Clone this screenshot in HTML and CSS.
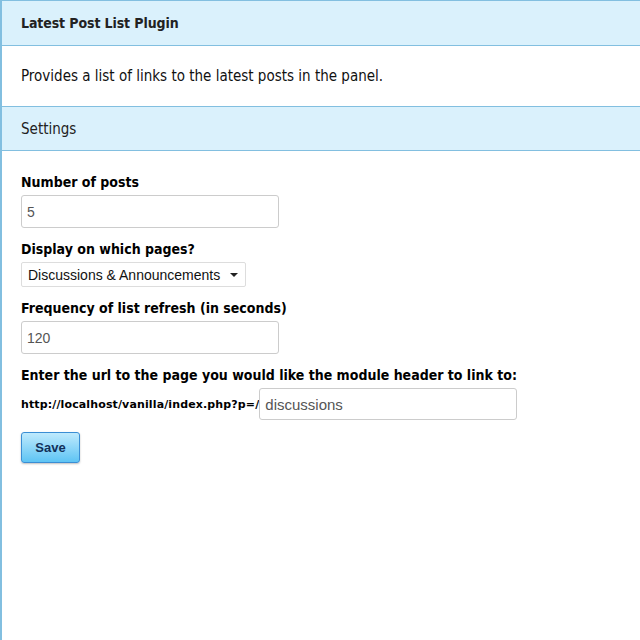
FILE: index.html
```html
<!DOCTYPE html>
<html>
<head>
<meta charset="utf-8">
<link rel="stylesheet" href="styles.css">
</head>
<body>
<div class="panel">
  <h1 class="band title">Latest Post List Plugin</h1>
  <div class="desc">Provides a list of links to the latest posts in the panel.</div>
  <h2 class="band settings">Settings</h2>
  <form class="form">
    <div class="field">
      <label class="label">Number of posts</label>
      <input class="input" type="text" value="5">
    </div>
    <div class="field">
      <label class="label">Display on which pages?</label>
      <div class="select"><span>Discussions &amp; Announcements</span><span class="caret"></span></div>
    </div>
    <div class="field">
      <label class="label">Frequency of list refresh (in seconds)</label>
      <input class="input" type="text" value="120">
    </div>
    <div class="field">
      <label class="label">Enter the url to the page you would like the module header to link to:</label>
      <div class="url-row">
        <span class="prefix">http://localhost/vanilla/index.php?p=/</span>
        <input class="input" type="text" value="discussions">
      </div>
    </div>
    <button class="save" type="button">Save</button>
  </form>
</div>
</body>
</html>
```
FILE: styles.css
```css
html, body {
  margin: 0;
  padding: 0;
  background: #fff;
}
body {
  font-family: "DejaVu Sans Condensed", "DejaVu Sans", sans-serif;
  color: #000;
  height: 640px;
}
.panel {
  border-left: 2px solid #82bfe0;
  min-height: 640px;
  box-sizing: border-box;
}
.band {
  margin: 0;
  background: #daf1fc;
  border-top: 1px solid #82bfe0;
  border-bottom: 1px solid #82bfe0;
  padding: 0 19px;
  display: flex;
  align-items: center;
  color: #222;
}
.title {
  height: 44px;
  font-size: 14px;
  font-weight: bold;
  letter-spacing: -0.1px;
}
.settings {
  height: 43px;
  font-size: 15px;
  font-weight: normal;
}
.desc {
  height: 60px;
  display: flex;
  align-items: center;
  padding: 0 19px;
  font-size: 15px;
  color: #111;
}
.form {
  padding: 22px 19px 0;
  display: flex;
  flex-direction: column;
}
.field {
  display: flex;
  flex-direction: column;
  margin-bottom: 12px;
}
.label {
  font-size: 14px;
  line-height: 18px;
  font-weight: bold;
  color: #000;
  margin-bottom: 4px;
}
.input {
  width: 258px;
  height: 33px;
  box-sizing: border-box;
  border: 1px solid #ccc;
  border-radius: 3px;
  padding: 0 5px;
  font-family: "Liberation Sans", Arial, sans-serif;
  font-size: 14px;
  color: #555;
  background: #fff;
}
.select {
  width: 225px;
  height: 25px;
  box-sizing: border-box;
  border: 1px solid #ddd;
  border-radius: 2px;
  display: flex;
  align-items: center;
  justify-content: space-between;
  padding: 0 4px 0 6px;
  font-family: "Liberation Sans", Arial, sans-serif;
  font-size: 14px;
  color: #111;
}
.caret {
  width: 0;
  height: 0;
  border-left: 4px solid transparent;
  border-right: 4px solid transparent;
  border-top: 4px solid #222;
  margin-right: 3px;
}
.url-row {
  display: flex;
  align-items: center;
}
.prefix {
  font-family: "DejaVu Sans", sans-serif;
  font-size: 11px;
  font-weight: bold;
  letter-spacing: 0.13px;
  color: #000;
}
.url-row .input {
  width: 258px;
  height: 32px;
  font-size: 15px;
}
.save {
  align-self: flex-start;
  width: 59px;
  height: 31px;
  border: 1px solid #3a8ed4;
  border-radius: 3px;
  background: linear-gradient(#bfeafd, #5ec4f4);
  box-shadow: 0 1px 2px rgba(0,0,0,0.25);
  font-family: "Liberation Sans", Arial, sans-serif;
  font-weight: bold;
  font-size: 13px;
  color: #12305a;
  padding: 0;
}
```
